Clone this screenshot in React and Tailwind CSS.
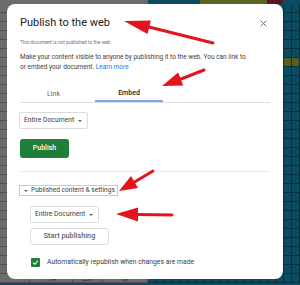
import React from 'react';

const grayCols = [30, 43, 30, 45];
const tealCols = Array.from({ length: 19 }, (_, i) => i);
const rows = Array.from({ length: 31 }, (_, i) => i);
const redRows = [4, 8, 11, 16, 21, 23, 28];

const SheetRow = ({ index }) => (
    <div className="flex h-[9px] shrink-0">
        {grayCols.map((w, i) => (
            <div key={i} style={{ width: w }} className="h-full bg-[#6b6b6b] border-r border-b border-[#4f4f4f] text-[6px] text-[#2a2a2a] text-center leading-[9px]">
                {index === 30 && i === 1 ? '114' : index === 30 && i === 2 ? '257' : index === 30 && i === 3 ? '69' : ''}
            </div>
        ))}
        {tealCols.map((c) => (
            <div
                key={c}
                className={
                    c === 16 && redRows.includes(index)
                        ? 'w-[8px] h-full bg-[#5c1622] border-r border-b border-[#08323f]'
                        : (c === 17 || c === 18) && index === 6
                        ? 'w-[8px] h-full bg-[#55601f] border-r border-b border-[#08323f]'
                        : 'w-[8px] h-full bg-[#0d4b61] border-r border-b border-[#08323f]'
                }
            />
        ))}
    </div>
);

const Dropdown = ({ className }) => (
    <div className={`flex items-center h-[17px] border border-[#dadce0] rounded-[2px] pl-[4px] pr-[5px] gap-[4px] text-[6.8px] text-[#3c4043] ${className}`}>
        <span>Entire Document</span>
        <span className="w-0 h-0 border-l-[2px] border-r-[2px] border-t-[2px] border-l-transparent border-r-transparent border-t-[#5f6368]"></span>
    </div>
);

const App = () => {
    return (
        <div className="relative w-[300px] h-[285px] overflow-hidden bg-[#0d4b61] font-[Roboto,sans-serif]">
            {/* spreadsheet behind */}
            <div className="flex flex-col">
                <div className="flex h-[4px] shrink-0">
                    <div className="w-[148px] bg-[#6b6b6b]"></div>
                    <div className="w-[52px] bg-[#0d4b61]"></div>
                    <div className="w-[67px] bg-[#5b6420]"></div>
                    <div className="w-[16px] bg-[#5c1622]"></div>
                    <div className="flex-1 bg-[#0d4b61]"></div>
                </div>
                {rows.map((r) => (
                    <SheetRow key={r} index={r} />
                ))}
            </div>

            {/* dialog */}
            <div className="absolute left-[7px] top-[4px] w-[276px] h-[275px] bg-white rounded-[8px] px-[13px] pt-[12px] flex flex-col">
                <div className="flex items-center justify-between h-[14px]">
                    <h1 className="text-[11px] text-[#202124] leading-[14px]">Publish to the web</h1>
                    <svg width="7" height="7" viewBox="0 0 10 10" className="mr-[3px]">
                        <path d="M1 1 L9 9 M9 1 L1 9" stroke="#5f6368" strokeWidth="1.3" />
                    </svg>
                </div>
                <p className="mt-[9px] text-[4.8px] leading-[8px] text-[#70757a]">This document is not published to the web.</p>
                <p className="mt-[6px] text-[6.5px] leading-[9.5px] text-[#3c4043] whitespace-nowrap">
                    Make your content visible to anyone by publishing it to the web. You can link to
                    <br />
                    or embed your document. <span className="text-[#1a73e8]">Learn more</span>
                </p>

                {/* tabs */}
                <div className="mt-[14px] flex border-b border-[#e0e0e0] h-[17px]">
                    <div className="w-[67px] flex items-center justify-center text-[7px] text-[#5f6368]">Link</div>
                    <div className="ml-[8px] w-[68px] flex items-center justify-center text-[7px] font-medium text-[#202124] border-b-[2px] border-[#7aa7e6]">Embed</div>
                </div>

                <Dropdown className="mt-[9px] self-start -ml-px" />

                {/* Publish */}
                <div className="mt-[10px] w-[49px] h-[19px] rounded-[3px] bg-[#1e7e3a] flex items-center justify-center text-[7px] font-medium text-white">Publish</div>

                <div className="mt-[13px] h-px bg-[#e8eaed]"></div>

                {/* Published content & settings */}
                <div className="mt-[13px] -ml-px self-start flex items-center h-[11px] border border-[#c8c8c8] pl-[4px] pr-[2px] gap-[3px] text-[6.6px] text-[#3c4043]">
                    <span className="w-0 h-0 border-l-[2px] border-r-[2px] border-t-[2px] border-l-transparent border-r-transparent border-t-[#5f6368]"></span>
                    <span>Published content &amp; settings</span>
                </div>

                <div className="ml-[10px] flex flex-col">
                    <Dropdown className="mt-[10px] self-start" />
                    <div className="mt-[5px] w-[79px] h-[17px] border border-[#dadce0] rounded-[3px] flex items-center justify-center text-[7.3px] font-medium text-[#5f6368]">Start publishing</div>
                    <div className="mt-[12px] ml-px flex items-center gap-[7px]">
                        <div className="w-[9px] h-[9px] bg-[#1e7e3a] rounded-[1px] flex items-center justify-center">
                            <svg width="7" height="7" viewBox="0 0 10 10">
                                <path d="M1.5 5.2 L4 7.5 L8.5 2.5" fill="none" stroke="white" strokeWidth="1.6" />
                            </svg>
                        </div>
                        <span className="text-[6.85px] text-[#3c4043]">Automatically republish when changes are made</span>
                    </div>
                </div>
            </div>

            {/* red annotation arrows */}
            <svg className="absolute left-0 top-0" width="300" height="285" viewBox="0 0 300 285">
                <g fill="#e3141c" stroke="#e3141c" strokeLinecap="round">
                    <line x1="213" y1="43" x2="149" y2="27" strokeWidth="3" />
                    <polygon points="124,21 150.9,20.4 147.5,34" stroke="none" />
                    <line x1="204" y1="70" x2="181" y2="79" strokeWidth="3" />
                    <polygon points="162,86 183.2,85.4 178.2,72.4" stroke="none" />
                    <line x1="153" y1="171" x2="134.5" y2="182" strokeWidth="3" />
                    <polygon points="119,191 138,187.9 131,175.9" stroke="none" />
                    <line x1="172" y1="215" x2="138" y2="214.5" strokeWidth="3" />
                    <polygon points="116,214 138,221.4 138,207.4" stroke="none" />
                </g>
            </svg>
        </div>
    );
};

export default App;
